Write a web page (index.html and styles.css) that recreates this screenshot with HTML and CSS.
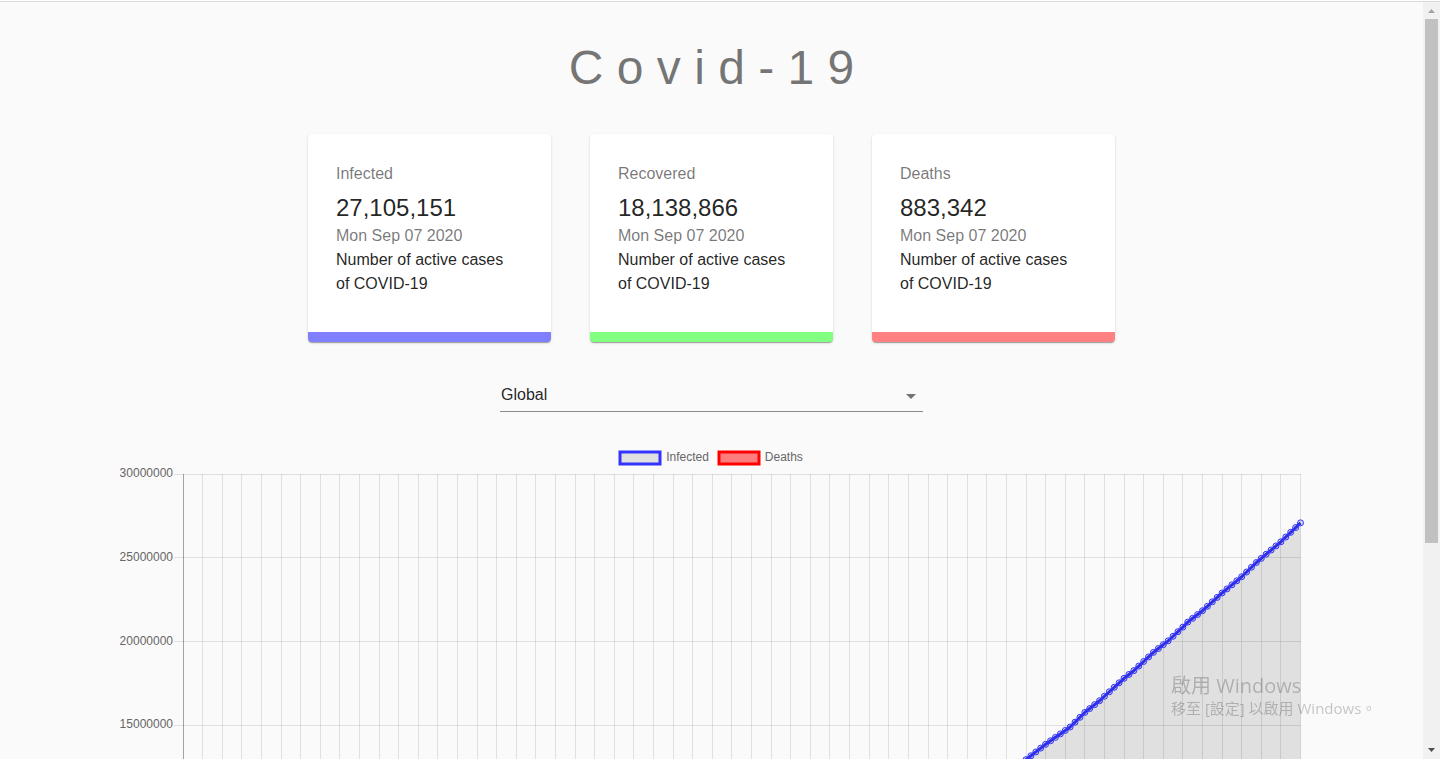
FILE: index.html
```html
<!DOCTYPE html>
<html lang="en">
<head>
<meta charset="utf-8">
<title>Covid-19</title>
<link rel="stylesheet" href="styles.css">
</head>
<body>
<div class="window">
  <main class="page">
    <h1 class="title">C o v i d - 1 9</h1>
    <section class="cards">
      <article class="card card-infected">
        <p class="card-label">Infected</p>
        <h2 class="card-value">27,105,151</h2>
        <p class="card-date">Mon Sep 07 2020</p>
        <p class="card-text">Number of active cases of COVID-19</p>
      </article>
      <article class="card card-recovered">
        <p class="card-label">Recovered</p>
        <h2 class="card-value">18,138,866</h2>
        <p class="card-date">Mon Sep 07 2020</p>
        <p class="card-text">Number of active cases of COVID-19</p>
      </article>
      <article class="card card-deaths">
        <p class="card-label">Deaths</p>
        <h2 class="card-value">883,342</h2>
        <p class="card-date">Mon Sep 07 2020</p>
        <p class="card-text">Number of active cases of COVID-19</p>
      </article>
    </section>
    <div class="picker">
      <select class="picker-select" aria-label="Country">
        <option>Global</option>
      </select>
      <svg class="picker-arrow" viewBox="0 0 24 24" aria-hidden="true"><path d="M7 10l5 5 5-5z"/></svg>
    </div>
    <section class="chart">
      <div class="legend">
        <span class="legend-item"><svg class="swatch swatch-infected" viewBox="0 0 44 16" aria-hidden="true"><rect x="2" y="2" width="40" height="12"/></svg>Infected</span>
        <span class="legend-item"><svg class="swatch swatch-deaths" viewBox="0 0 44 16" aria-hidden="true"><rect x="2" y="2" width="40" height="12"/></svg>Deaths</span>
      </div>
      <svg class="plot" id="plot" role="img" aria-label="Infected and deaths over time"></svg>
    </section>
  </main>
  <div class="scrollbar" aria-hidden="true">
    <svg class="scroll-arrow scroll-arrow-up" viewBox="0 0 17 17"><path d="M5 11h7L8.500 7z"/></svg>
    <div class="scroll-track"><div class="scroll-thumb"></div></div>
    <svg class="scroll-arrow" viewBox="0 0 17 17"><path d="M5 6h7L8.500 10z"/></svg>
  </div>
</div>
<div class="watermark" lang="zh-Hant">
  <div class="watermark-title">啟用 Windows</div>
  <div class="watermark-text">移至 [設定] 以啟用 Windows。</div>
</div>
<script src="chart.js"></script>
</body>
</html>
```

FILE: styles.css
```css
* { box-sizing: border-box; }

body {
  margin: 0;
  background: #fafafa;
  color: rgba(0, 0, 0, 0.87);
  font-family: "Liberation Sans", Arial, sans-serif;
  font-size: 16px;
  line-height: 24px;
}

h1, h2, p { margin: 0; font-weight: 400; }

.window {
  display: flex;
  height: 100vh;
  padding-top: 2px;
  overflow: hidden;
  background: linear-gradient(#fff 1px, #d9dbdb 1px, #d9dbdb 2px, #fafafa 2px);
}

.page {
  flex: 1;
  min-width: 0;
  overflow-x: hidden;
  overflow-y: auto;
  scrollbar-width: none;
  padding-top: 38px;
}

.title {
  color: rgba(0, 0, 0, 0.54);
  font-size: 48px;
  line-height: 56px;
  text-align: center;
}

.cards {
  display: grid;
  grid-template-columns: repeat(3, minmax(0, 243px));
  justify-content: center;
  gap: 39px;
  margin-top: 38px;
}

.card {
  padding: 28px 36px 36px 28px;
  background: #fff;
  border-radius: 4px;
  border-bottom: 10px solid;
  box-shadow: 0 2px 1px -1px rgba(0, 0, 0, 0.2), 0 1px 1px rgba(0, 0, 0, 0.14), 0 1px 3px rgba(0, 0, 0, 0.12);
}

.card-infected { border-bottom-color: #8080ff; }
.card-recovered { border-bottom-color: #80ff80; }
.card-deaths { border-bottom-color: #ff8080; }

.card-value, .card-text { color: rgba(0, 0, 0, 0.87); }
.card-label, .card-date { color: rgba(0, 0, 0, 0.54); }
.card-label { margin-bottom: 6px; }
.card-value { font-size: 24px; line-height: 32px; }

.picker {
  position: relative;
  width: 423px;
  max-width: 100%;
  margin: 37px auto 0;
}

.picker-select {
  display: block;
  width: 100%;
  height: 33px;
  padding: 6px 24px 6px 1px;
  border: 0;
  border-bottom: 1px solid #8c8c8c;
  border-radius: 0;
  background: transparent;
  color: rgba(0, 0, 0, 0.87);
  font: inherit;
  line-height: 20px;
  appearance: none;
}

.picker-arrow {
  position: absolute;
  right: 0;
  top: 5px;
  width: 24px;
  height: 24px;
  fill: rgba(0, 0, 0, 0.54);
  pointer-events: none;
}

.chart { margin: 37px 120px 0; }

.legend {
  display: flex;
  justify-content: center;
  gap: 8px;
  padding-right: 2px;
  color: #666;
  font-size: 12px;
  line-height: 16px;
}

.legend-item { display: flex; gap: 4px; }
.swatch { width: 44px; height: 16px; margin-top: 1px; stroke-width: 3; }
.swatch-infected { fill: rgba(0, 0, 0, 0.1); stroke: #3333ff; }
.swatch-deaths { fill: rgba(255, 0, 0, 0.5); stroke: #ff0000; }

.plot { display: block; width: 100%; overflow: visible; }
.plot text { fill: #666; font-size: 12px; text-anchor: end; }
.grid { stroke: rgba(0, 0, 0, 0.1); shape-rendering: crispEdges; }
.axis { stroke: rgba(0, 0, 0, 0.35); shape-rendering: crispEdges; }
.area-infected { fill: rgba(0, 0, 0, 0.1); }
.area-deaths { fill: rgba(255, 0, 0, 0.5); }
.line { fill: none; stroke-width: 3; stroke-linejoin: round; }
.line-infected { stroke: #3333ff; }
.line-deaths { stroke: #ff0000; }
.point { fill: rgba(0, 0, 0, 0.1); stroke: #3333ff; stroke-width: 1; }

.scrollbar {
  display: flex;
  flex-direction: column;
  width: 17px;
  background: #f1f1f1;
}

.scroll-arrow { width: 17px; height: 17px; fill: #505050; }
.scroll-arrow-up { fill: #a3a3a3; }
.scroll-track { flex: 1; padding: 0 2px; }
.scroll-thumb { height: 72.5%; background: #c1c1c1; }

.watermark {
  position: fixed;
  right: 60px;
  bottom: 41px;
  width: 209px;
  color: rgba(0, 0, 0, 0.22);
  font-family: "Open Sans", "Noto Sans CJK TC", sans-serif;
  white-space: nowrap;
  pointer-events: none;
}

.watermark-title { font-size: 20px; line-height: 24px; }
.watermark-text { font-size: 15px; line-height: 20px; }
```

FILE: chart.js
```js
const NS = "http://www.w3.org/2000/svg";
const DAYS = 228;
const MAX = 30;

// Day index and cumulative infections, in millions.
const anchors = [
  [0, 0], [50, 0.13], [60, 0.3], [70, 0.93], [80, 1.85], [100, 3.4],
  [120, 5.2], [140, 7.6], [160, 10.8], [172, 12.93], [176, 13.85], [181, 14.88],
  [184, 15.75], [187, 16.45], [192, 17.79], [194, 18.25], [198, 19.34],
  [201, 20.03], [204, 20.85], [205, 21.15], [208, 21.83], [212, 22.89],
  [216, 23.86], [219, 24.71], [224, 25.95], [228, 27.08]
];

function infectedAt(day) {
  const i = Math.max(1, anchors.findIndex(a => a[0] >= day));
  const [d0, v0] = anchors[i - 1];
  const [d1, v1] = anchors[i];
  return v0 + (v1 - v0) * (day - d0) / (d1 - d0);
}

function add(parent, name, attrs, text) {
  const el = document.createElementNS(NS, name);
  for (const key in attrs) el.setAttribute(key, attrs[key]);
  if (text) el.textContent = text;
  parent.appendChild(el);
}

// Centre of the pixel that a coordinate falls in.
const snap = n => Math.floor(n) + 0.5;

function draw() {
  const svg = document.getElementById("plot");
  svg.replaceChildren();
  const left = 63, top = 8;
  const right = svg.clientWidth - 2.5;
  const height = Math.round((right - left) * 0.4495);
  const bottom = top + height;
  svg.style.height = bottom + 10 + "px";
  const x = day => left + (right - left) * day / DAYS;
  const y = value => bottom - height * value / MAX;

  for (let v = 0; v <= MAX; v += 5) {
    const gy = snap(y(v));
    add(svg, "line", { class: "grid", x1: left - 9, x2: right, y1: gy, y2: gy });
    add(svg, "text", { x: left - 10, y: Math.ceil(y(v)) + 3 }, String(v * 1000000));
  }
  for (let d = 4; d <= DAYS; d += 4) {
    const gx = snap(x(d));
    add(svg, "line", { class: "grid", x1: gx, x2: gx, y1: top, y2: bottom });
  }
  add(svg, "line", { class: "axis", x1: snap(left), x2: snap(left), y1: top, y2: bottom });

  const series = [["deaths", d => infectedAt(d) * 0.0326], ["infected", infectedAt]];
  for (const [name, value] of series) {
    const pts = [];
    for (let d = 0; d <= DAYS; d++) pts.push([x(d), y(value(d))]);
    const path = "M" + pts.map(p => p.join(",")).join("L");
    add(svg, "path", { class: "area-" + name, d: path + `L${right},${bottom}L${left},${bottom}Z` });
    add(svg, "path", { class: "line line-" + name, d: path });
    if (name === "infected") {
      for (const [cx, cy] of pts) add(svg, "circle", { class: "point", cx, cy, r: 3 });
    }
  }
}

draw();
window.addEventListener("resize", draw);
```
